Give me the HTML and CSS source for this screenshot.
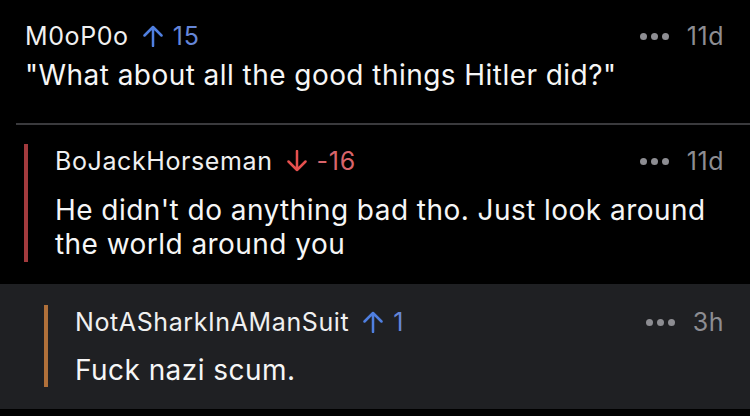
FILE: index.html
```html
<!DOCTYPE html>
<html>
<head>
<meta charset="utf-8">
<link rel="stylesheet" href="styles.css">
</head>
<body>
<div class="thread">
  <div class="comment c1">
    <div class="body">
      <div class="head">
        <span class="user">M0oP0o</span>
        <span class="vote up">
          <svg class="arrow" viewBox="0 0 22 22" width="22" height="22"><path d="M11 21V2M2.5 10.5L11 2l8.5 8.5" fill="none" stroke="currentColor" stroke-width="2.5" stroke-linecap="round" stroke-linejoin="round"/></svg>
          <span class="score">15</span>
        </span>
        <span class="meta"><span class="dots"><i></i><i></i><i></i></span><span class="age">11d</span></span>
      </div>
      <div class="text">"What about all the good things Hitler did?"</div>
    </div>
  </div>
  <div class="sep"></div>
  <div class="comment c2">
    <div class="bar red"></div>
    <div class="body">
      <div class="head">
        <span class="user">BoJackHorseman</span>
        <span class="vote down">
          <svg class="arrow" viewBox="0 0 22 22" width="22" height="22"><path d="M11 1v19M2.5 11.5L11 20l8.5-8.5" fill="none" stroke="currentColor" stroke-width="2.5" stroke-linecap="round" stroke-linejoin="round"/></svg>
          <span class="score">-16</span>
        </span>
        <span class="meta"><span class="dots"><i></i><i></i><i></i></span><span class="age">11d</span></span>
      </div>
      <div class="text">He didn't do anything bad tho. Just look around<br>the world around you</div>
    </div>
  </div>
  <div class="comment c3">
    <div class="bar orange"></div>
    <div class="body">
      <div class="head">
        <span class="user">NotASharkInAManSuit</span>
        <span class="vote up">
          <svg class="arrow" viewBox="0 0 22 22" width="22" height="22"><path d="M11 21V2M2.5 10.5L11 2l8.5 8.5" fill="none" stroke="currentColor" stroke-width="2.5" stroke-linecap="round" stroke-linejoin="round"/></svg>
          <span class="score">1</span>
        </span>
        <span class="meta"><span class="dots"><i></i><i></i><i></i></span><span class="age">3h</span></span>
      </div>
      <div class="text">Fuck nazi scum.</div>
    </div>
  </div>
</div>
</body>
</html>
```

FILE: styles.css
```css
* { box-sizing: border-box; }
html, body {
  margin: 0;
  padding: 0;
  background: #000;
  width: 750px;
  height: 416px;
  overflow: hidden;
  font-family: Inter, "Liberation Sans", sans-serif;
  color: #f2f2f2;
}
.thread {
  display: flex;
  flex-direction: column;
}
.comment {
  display: flex;
}
.head {
  display: flex;
  align-items: center;
  height: 30px;
}
.user {
  font-size: 25px;
  letter-spacing: 0.6px;
  color: #f0f0f0;
}
.vote {
  display: flex;
  align-items: center;
  margin-left: 13px;
  font-size: 25px;
  letter-spacing: 0.8px;
}
.vote .arrow { margin-right: 9px; }
.vote.up { color: #4f7fe0; }
.vote.up .score { color: #6586d8; }
.vote.down { color: #e6504e; }
.vote.down .score { color: #d9646a; }
.meta {
  margin-left: auto;
  display: flex;
  align-items: center;
  color: #8d8d92;
  font-size: 25px;
  letter-spacing: 0.5px;
}
.dots {
  display: flex;
  gap: 4px;
  margin-right: 18px;
}
.dots i {
  display: block;
  width: 7px;
  height: 7px;
  border-radius: 50%;
  background: #8d8d92;
}
.text {
  font-size: 28px;
  line-height: 34px;
  letter-spacing: 0.45px;
  color: #f6f6f6;
}
.c1 {
  padding: 21px 26px 0 25px;
  height: 123px;
}
.c1 .body { flex: 1; }
.c1 .text { margin-top: 7px; }
.sep {
  height: 2px;
  margin-left: 16px;
  background: #3a3a3d;
}
.c2 {
  padding: 21px 26px 0 24px;
  height: 159px;
}
.c2 .body { flex: 1; padding-left: 27px; }
.c2 .text { margin-top: 17px; }
.bar {
  width: 4px;
  flex: none;
}
.bar.red { background: #a23a3d; height: 118px; margin-top: -2px; }
.bar.orange { background: #b0703a; height: 82px; margin-top: -2px; }
.c3 {
  background: #1f2023;
  padding: 23px 26px 0 44px;
  height: 125px;
}
.c3 .body { flex: 1; padding-left: 27px; }
.c3 .text { margin-top: 16px; }
```
